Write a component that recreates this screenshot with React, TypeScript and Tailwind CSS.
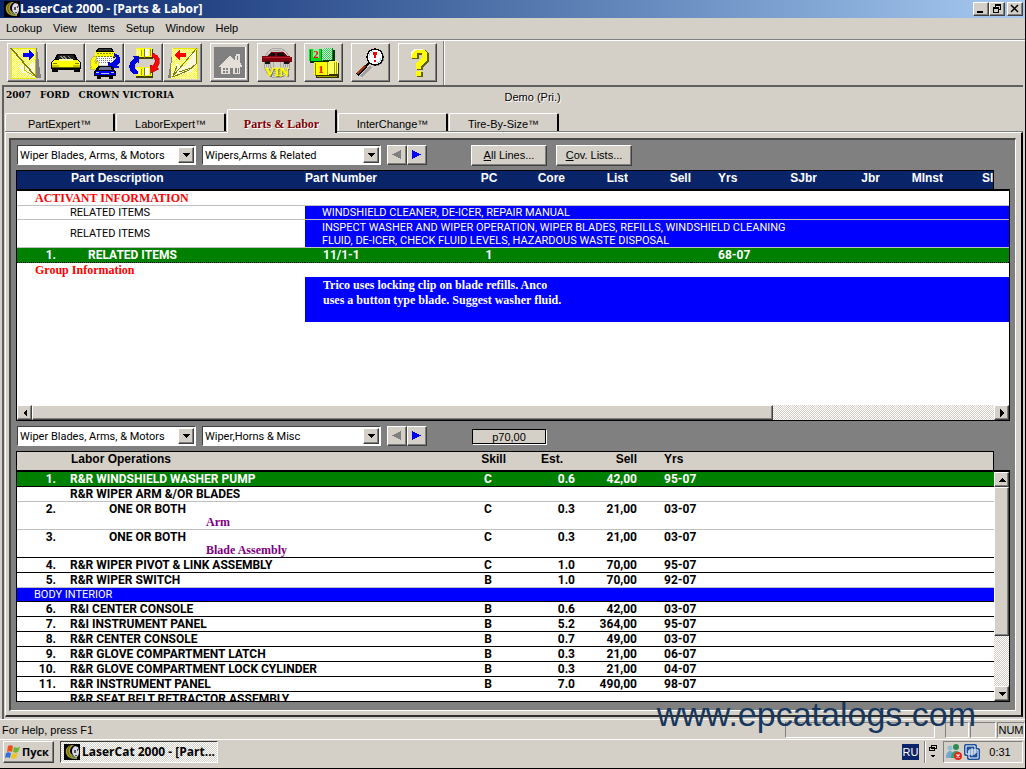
import React from 'react';
import { clsx } from 'clsx';

const SANS = "font-['Liberation_Sans',Arial,sans-serif]";
const GRID = "font-['Roboto',Arial,sans-serif]";
const CAPTION_FONT = "font-['Open_Sans',Tahoma,sans-serif] font-bold";
const SERIF = "font-['Liberation_Serif',serif] font-bold";
const RAISED = 'bg-[#d4d0c8] border border-t-white border-l-white border-r-[#404040] border-b-[#404040] shadow-[inset_-1px_-1px_0_#808080]';
const SUNKEN = 'border border-t-[#808080] border-l-[#808080] border-r-white border-b-white';
const DITHER = 'bg-[repeating-conic-gradient(#ffffff_0_25%,#d4d0c8_0_50%)] bg-[length:2px_2px]';

/* ---------- ICONS ---------- */

const Glyph: React.FC<{ children: React.ReactNode }> = ({ children }) => (
  <svg viewBox="0 0 32 32" className="w-8 h-8 overflow-visible" shapeRendering="crispEdges" aria-hidden="true">
    <defs>
      <pattern id="yellowDither" width="2" height="2" patternUnits="userSpaceOnUse">
        <rect width="2" height="2" fill="#ffff00" />
        <rect width="1" height="1" fill="#fff" />
        <rect x="1" y="1" width="1" height="1" fill="#fff" />
      </pattern>
      <pattern id="greenDither" width="2" height="2" patternUnits="userSpaceOnUse">
        <rect width="2" height="2" fill="#00f030" />
        <rect width="1" height="1" fill="#fff" />
        <rect x="1" y="1" width="1" height="1" fill="#fff" />
      </pattern>
    </defs>
    {children}
  </svg>
);

const NextPageIcon = () => (
  <Glyph>
    <path d="M25 1h1l4 30h-5z" fill="#808080" />
    <path d="M0 1h25v31H0z" fill="url(#yellowDither)" />
    <path d="M0.500 31.500V1.500h24v30z" stroke="#e8e800" fill="none" />
    <path d="M7 17l4 8 13 6V12l-5 7-6-1z" fill="#f8f8d8" />
    <path d="M14 18l-1 5 10 6M24 13v17" stroke="#c0c000" fill="none" />
    <path d="M0 1l25 29" stroke="#808000" strokeWidth="1.500" />
    <path d="M12 6h6V3l6 5-6 5v-3h-6z" fill="#0000ff" />
  </Glyph>
);

const PrevPageIcon = () => (
  <Glyph>
    <path d="M6 1L1 31h6z" fill="#808080" />
    <path d="M5 1h26v31H4z" fill="url(#yellowDither)" />
    <path d="M5.500 1.500h25v30" stroke="#e8e800" fill="none" />
    <path d="M5 29l5-12 3 1 5 1L29 3v14l-5 8-9 2z" fill="#f8f8d8" />
    <path d="M30 1L5 30M6 30l16-7 7-6V3M10 19l-4 10M12 25l12-4" stroke="#808000" fill="none" />
    <path d="M19 6h-6V3L7 8l6 5v-3h6z" fill="#ff0000" />
  </Glyph>
);

const CarIcon = () => (
  <Glyph>
    <path d="M7 7h18l3 6 3 2v7h-1v3h-6v-2H8v2H2v-3H1v-7l3-2z" fill="#000" />
    <path d="M9 8h14l2 4H7z" fill="#202020" />
    <path d="M10 9l4 3M13 9l4 3M18 9l3 3" stroke="#909090" fill="none" />
    <path d="M5 13h22l3 2v3H2v-3z" fill="#ffff00" />
    <path d="M9 12h14v2H9z" fill="#ffffa0" />
    <path d="M2 18h28v2H2z" fill="#c8c800" />
    <path d="M3 16h4v1H3zM25 16h4v1h-4z" fill="#808000" />
    <path d="M9 18h14v2H9z" fill="#ffff00" />
    <path d="M2 20h28v1H2z" fill="#606000" />
  </Glyph>
);

const CarSwapIcon = () => (
  <Glyph>
    <path d="M9 1h14l3 5v5H6V6z" fill="#000" />
    <path d="M10 2h12l1 2H9z" fill="#303030" />
    <path d="M6 5h20v5H6z" fill="#ffff00" />
    <path d="M8 6h16M6 9h20" stroke="#808000" strokeDasharray="2 1" />
    <path d="M8 10h16v8H8z" fill="#fff" />
    <path d="M8 11.500h16M8 13.500h16M8 15.500h16" stroke="#808080" strokeDasharray="1 1" />
    <path d="M6 9C1 11 0 17 3 20H1v2h8v-8H7v3c-2-2-1-5 1-6z" fill="#ffff00" stroke="#a0a000" strokeWidth=".5" />
    <path d="M25 6c8 2 8 9 3 13h2v2H19v-6l3 1c5-2 6-6 3-8z" fill="#0000e0" />
    <path d="M9 19h14l4 6v4h-3v3h-4v-2h-8v2H8v-3H5v-4z" fill="#000" />
    <path d="M7 24h18l1 4H6z" fill="#0000ff" />
    <path d="M11 20h11l1 3H10z" fill="#707090" />
    <path d="M7 25h3v1H7zM22 25h3v1h-3zM12 26h8v1h-8z" fill="#c0c0ff" />
  </Glyph>
);

const Book: React.FC<{ y: number }> = ({ y }) => (
  <g transform={`translate(8 ${y})`}>
    <path d="M0 2h17v10H0z" fill="#404000" />
    <path d="M0 1h7l1 1 1-1h7v9H9l-1 1-1-1H0z" fill="#ffff00" />
    <path d="M1 2h1v7H1zM3 2h1v7H3zM9 2h4v7H9z" fill="#fff" />
    <path d="M5 3v6M14.500 2v7" stroke="#a0a000" fill="none" />
    <path d="M8.500 2v9" stroke="#808000" fill="none" />
  </g>
);

const BookSwapIcon = () => (
  <Glyph>
    <Book y={0} />
    <Book y={19} />
    <path d="M4 9h7v8l-2-2c-4 3-3 7 1 9v3h-4C0 24-1 16 6 11z" fill="#0000e0" />
    <path d="M25 6c8 3 8 10 4 15l2 1-8 4-1-8 3 1c3-4 3-7-1-9z" fill="#ff0000" stroke="#a00000" strokeWidth=".5" />
  </Glyph>
);

const HomeIcon = () => (
  <Glyph>
    <path d="M0 0h32v32H0z" fill="#808080" />
    <path d="M4 20L16 9l5 4V9h1V7h4v8l2 4v1z" fill="#e4e0d8" />
    <path d="M7 20h19v7H7z" fill="#e4e0d8" />
    <path d="M9 21h5v5H9zM16 21h3v6h-3zM21 21h4v5h-4z" fill="#808080" />
    <path d="M11.500 21v5M9 23.500h5M23.500 21v5" stroke="#e4e0d8" />
    <path d="M23 9h1v4h-1z" fill="#808080" />
    <path d="M31.500 0v31.500H0" stroke="#fff" fill="none" />
  </Glyph>
);

const VinIcon = () => (
  <Glyph>
    <g fill="none" stroke="#a8a8a8">
      <ellipse cx="16" cy="16" rx="13" ry="15" />
      <ellipse cx="16" cy="16" rx="11" ry="13" />
      <ellipse cx="16" cy="16" rx="9" ry="11" />
      <ellipse cx="16" cy="16" rx="7" ry="9" />
      <ellipse cx="16" cy="17" rx="4" ry="6" />
    </g>
    <path d="M1 9h5l4-4h12l4 4 5 1v5h-2v1h-5v-1H9v1H4v-1H1z" fill="#800010" />
    <path d="M2 10h28v1H2z" fill="#b02030" />
    <path d="M10 6h4v3H8zM16 6h5l3 3h-8z" fill="#101010" />
    <path d="M4 14h5v3H4zM23 14h5v3h-5z" fill="#201010" />
    <text x="17" y="30" textAnchor="middle" className="font-['Liberation_Serif',serif] font-bold text-[13px]" fill="#505000">VIN</text>
    <text x="16" y="29" textAnchor="middle" className="font-['Liberation_Serif',serif] font-bold text-[13px]" fill="#ffff00" stroke="#ffff00" strokeWidth=".4">VIN</text>
  </Glyph>
);

const CatalogIcon = () => (
  <Glyph>
    <path d="M2 3h24l1 1v12H2z" fill="#003000" />
    <path d="M1 2h12v12H1z" fill="#00e020" />
    <path d="M2 3v12" stroke="#006000" />
    <path d="M13 2l3-1h9v12h-9l-3 1z" fill="url(#greenDither)" />
    <path d="M13.500 2v12M24.500 1v12" stroke="#008020" />
    <path d="M5 2h6v9H5z" fill="#90f0a0" />
    <path d="M8 16h23v15H8z" fill="#303000" />
    <path d="M6 15h13v13H6z" fill="#ffff00" />
    <path d="M7.500 16v13" stroke="#808000" />
    <path d="M19 15l3-1h8v13h-8l-3 1z" fill="#ffff60" />
    <path d="M19.500 15v13M26.500 15v12M28.500 15v12" stroke="#a0a000" />
    <path d="M9 29h20v1H9z" fill="#a0a000" />
    <text x="8" y="11" textAnchor="middle" className="font-['Liberation_Serif',serif] font-bold text-[11px]" fill="#ff0000">2</text>
    <text x="13" y="26" textAnchor="middle" className="font-['Liberation_Serif',serif] font-bold text-[11px]" fill="#ff0000">1</text>
  </Glyph>
);

const MagnifierIcon = () => (
  <Glyph>
    <path d="M14 19L5 29l2 1 10-10z" fill="#a0a0a0" />
    <circle cx="21" cy="11" r="8" fill="#909090" />
    <circle cx="20" cy="10" r="8" fill="#fff" stroke="#000" strokeWidth="1.500" />
    <path d="M14 9a6 6 0 0 1 4-5M26 11a6 6 0 0 1-4 5" stroke="#80e0e0" fill="none" />
    <path d="M18 5h4l-1 6h-2zM19 13h2v2h-2z" fill="#ff0000" />
    <path d="M14 16l-3 3" stroke="#000" strokeWidth="2" />
    <path d="M11 19L2 28" stroke="#000" strokeWidth="4" />
    <path d="M10 19L2 27" stroke="#a03010" strokeWidth="2" />
  </Glyph>
);

const HelpIcon = () => (
  <Glyph>
    <path d="M10 12V6l4-3h9l4 4v7l-6 6v3h-6v-6l6-5V8h-4v4z" fill="#606000" />
    <path d="M15 25h6v5h-6z" fill="#606000" />
    <path d="M9 11V5l3-3h9l4 4v7l-6 6v3h-5v-6l6-5V6h-5v5z" fill="#ffff00" />
    <path d="M9 5l3-3h9v1h-8l-3 3v4H9z" fill="#fff" />
    <path d="M14 24h5v5h-5z" fill="#ffff00" />
  </Glyph>
);

const CatLogo = () => (
  <svg viewBox="0 0 16 16" className="w-4 h-4 shrink-0" aria-hidden="true">
    <path d="M0 0h16v16H0z" fill="#000" />
    <path d="M8 1C3 2 1 5 2 9c1 4 4 6 11 6v-2C9 12 6 10 6 7c0-2 1-4 4-6z" fill="#a8982c" />
    <path d="M6 2C3 5 3 10 7 13" stroke="#605818" fill="none" />
    <path d="M11 2l3 1 1 4c0 4-1 6-3 6-3-1-4-3-4-6 0-2 1-4 3-5z" fill="#d8d8e8" />
    <path d="M10 6h2v3h-2zM13 5h1v2h-1zM11 11h2v1h-2z" fill="#505050" />
    <path d="M8 12l3 2" stroke="#008080" />
  </svg>
);

const WindowsFlag = () => (
  <svg viewBox="0 0 16 16" className="w-4 h-4 shrink-0" aria-hidden="true">
    <path d="M3 2c2-1 3-1 5 0L7 8C5 7 4 7 2 8z" fill="#e8501c" />
    <path d="M9 3c2 1 3 1 6 0l-2 5c-2 1-3 1-5 0z" fill="#6cb52d" />
    <path d="M1 9c2-1 3-1 5 0l-1 5c-2-1-3-1-5 0z" fill="#2f6fe0" />
    <path d="M7 9c2 1 3 1 6 0l-2 5c-2 1-3 1-5 0z" fill="#f5c21b" />
  </svg>
);

type Dir = 'left' | 'right' | 'up' | 'down';

const Arrow: React.FC<{ dir: Dir; className?: string }> = ({ dir, className = 'w-2 h-2' }) => {
  const paths = { left: 'M6 0v8L2 4z', right: 'M2 0v8l4-4z', up: 'M0 6h8L4 2z', down: 'M0 2h8L4 6z' };
  return (
    <svg viewBox="0 0 8 8" className={className} shapeRendering="crispEdges" aria-hidden="true">
      <path d={paths[dir]} fill="currentColor" />
    </svg>
  );
};

/* ---------- CONTROLS ---------- */

const ToolButton: React.FC<{ label: string; className?: string; children: React.ReactNode }> = ({ label, className, children }) => (
  <button aria-label={label} className={clsx('w-[39px] h-[39px] flex items-center justify-center shrink-0', RAISED, className)}>
    {children}
  </button>
);

const Combo: React.FC<{ label: string; value: string }> = ({ label, value }) => (
  <div className="flex w-[179px] h-5 p-px bg-white border border-t-[#404040] border-l-[#404040] border-r-white border-b-white">
    <select aria-label={label} className={clsx('flex-1 min-w-0 appearance-none bg-white pl-px pt-0.5 text-[11px] leading-[14px] text-black outline-none', GRID)}>
      <option>{value}</option>
    </select>
    <span className={clsx('w-4 flex items-center justify-center pointer-events-none', RAISED)}>
      <Arrow dir="down" />
    </span>
  </div>
);

const Spin: React.FC<{ name: string }> = ({ name }) => (
  <div className="flex">
    <button aria-label={`Previous ${name}`} className={clsx('w-5 h-5 flex items-center justify-center', RAISED)}>
      <svg viewBox="0 0 10 10" className="w-2.5 h-2.5" shapeRendering="crispEdges"><path d="M9 0v9L0 4.500z" fill="#808080" /></svg>
    </button>
    <button aria-label={`Next ${name}`} className={clsx('w-5 h-5 flex items-center justify-center', RAISED)}>
      <svg viewBox="0 0 10 10" className="w-2.5 h-2.5" shapeRendering="crispEdges"><path d="M0 0v9l9-4.500z" fill="#0000ff" /></svg>
    </button>
  </div>
);

const ScrollButton: React.FC<{ dir: Dir }> = ({ dir }) => (
  <button aria-label={`Scroll ${dir}`} className={clsx('w-[15px] h-[15px] shrink-0 flex items-center justify-center', RAISED)}>
    <Arrow dir={dir} />
  </button>
);

/* ---------- PARTS ---------- */

const partHeads = [
  { label: 'PC', cls: 'text-center' },
  { label: 'Core', cls: 'text-right' },
  { label: 'List', cls: 'text-right' },
  { label: 'Sell', cls: 'text-right' },
  { label: 'Yrs', cls: 'text-left pl-[27px]' },
  { label: 'SJbr', cls: 'text-right' },
  { label: 'Jbr', cls: 'text-right' },
  { label: 'MInst', cls: 'text-right' },
  { label: 'SI', cls: 'text-left pl-[39px]' },
];

const PartCols = () => (
  <colgroup>
    <col className="w-[39px]" />
    <col className="w-[249px]" />
    <col className="w-[165px]" />
    <col className="w-[38px]" />
    <col className="w-[57px]" />
    <col className="w-[63px]" />
    <col className="w-[63px]" />
    <col className="w-[79px]" />
    <col className="w-[47px]" />
    <col className="w-[63px]" />
    <col className="w-[63px]" />
    <col />
  </colgroup>
);

const TABLE = 'w-full table-fixed border-separate border-spacing-0';

const PartsPane = () => (
  <section className="flex-1 min-h-0 flex flex-col">
    <div className="mr-4 border border-b-0 border-black bg-[#0a246a] overflow-hidden">
      <table className={clsx(TABLE, SANS, 'text-[12px] leading-[14px] text-white')}>
        <PartCols />
        <thead>
          <tr className="h-[18px] align-top">
            <th />
            <th className="text-left pl-[15px]">Part Description</th>
            <th className="text-left">Part Number</th>
            {partHeads.map(h => <th key={h.label} className={clsx('overflow-hidden', h.cls)}>{h.label}</th>)}
          </tr>
        </thead>
      </table>
    </div>
    <div className="flex-1 min-h-0 flex flex-col border border-t-2 border-black bg-white">
      <div className="flex-1 min-h-0 overflow-hidden">
        <table className={clsx(TABLE, GRID, 'text-[11px] leading-[14px] text-black')}>
          <PartCols />
          <tbody>
            <tr>
              <td colSpan={12} className={clsx('h-[15px] pl-[18px] border-b border-[#c0c0c0] text-[12px] text-[#ff0000]', SERIF)}>ACTIVANT INFORMATION</td>
            </tr>
            <tr>
              <td className="border-b border-[#c0c0c0]" />
              <td className="h-[14px] leading-[13px] pl-[14px] border-b border-[#c0c0c0]">RELATED ITEMS</td>
              <td colSpan={10} className="leading-[13px] pl-[17px] bg-[#0000ff] text-white border-b border-[#c0c0c0]">WINDSHIELD CLEANER, DE-ICER, REPAIR MANUAL</td>
            </tr>
            <tr>
              <td className="border-b border-[#c0c0c0]" />
              <td className="h-7 pl-[14px] border-b border-[#c0c0c0]">RELATED ITEMS</td>
              <td colSpan={10} className="h-7 leading-[13px] pl-[17px] bg-[#0000ff] text-white border-b border-[#c0c0c0]">
                INSPECT WASHER AND WIPER OPERATION, WIPER BLADES, REFILLS, WINDSHIELD CLEANING<br />
                FLUID, DE-ICER, CHECK FLUID LEVELS, HAZARDOUS WASTE DISPOSAL
              </td>
            </tr>
            <tr className="bg-[#008000] text-white text-[12px] font-bold">
              <td className="h-[15px] text-right border-b border-dotted border-black">1.</td>
              <td className="pl-8 border-b border-dotted border-black">RELATED ITEMS</td>
              <td className="pl-[18px] border-b border-dotted border-black">11/1-1</td>
              <td className="text-center border-b border-dotted border-black">1</td>
              <td colSpan={3} className="border-b border-dotted border-black" />
              <td colSpan={5} className="pl-[27px] border-b border-dotted border-black">68-07</td>
            </tr>
            <tr>
              <td colSpan={12} className={clsx('h-[14px] pl-[18px] text-[12px] text-[#ff0000]', SERIF)}>Group Information</td>
            </tr>
            <tr>
              <td colSpan={2} />
              <td colSpan={10} className={clsx('h-[45px] pl-[18px] pt-px align-top bg-[#0000ff] text-white text-[12px] leading-[15px]', SERIF)}>
                Trico uses locking clip on blade refills. Anco<br />
                uses a button type blade. Suggest washer fluid.
              </td>
            </tr>
          </tbody>
        </table>
      </div>
      <div className="flex">
        <ScrollButton dir="left" />
        <div className={clsx('flex-1', DITHER)}>
          <div className={clsx('h-full w-[77%]', RAISED)} />
        </div>
        <ScrollButton dir="right" />
      </div>
    </div>
  </section>
);

/* ---------- LABOR ---------- */

interface LaborRow {
  no?: string;
  text: string;
  note?: string;
  skill?: string;
  est?: string;
  sell?: string;
  yrs?: string;
  kind?: 'selected' | 'section';
  soft?: boolean;
}

const laborRows: LaborRow[] = [
  { no: '1.', text: 'R&R WINDSHIELD WASHER PUMP', skill: 'C', est: '0.6', sell: '42,00', yrs: '95-07', kind: 'selected' },
  { text: 'R&R WIPER ARM &/OR BLADES', soft: true },
  { no: '2.', text: 'ONE OR BOTH', note: 'Arm', skill: 'C', est: '0.3', sell: '21,00', yrs: '03-07', soft: true },
  { no: '3.', text: 'ONE OR BOTH', note: 'Blade Assembly', skill: 'C', est: '0.3', sell: '21,00', yrs: '03-07' },
  { no: '4.', text: 'R&R WIPER PIVOT & LINK ASSEMBLY', skill: 'C', est: '1.0', sell: '70,00', yrs: '95-07' },
  { no: '5.', text: 'R&R WIPER SWITCH', skill: 'B', est: '1.0', sell: '70,00', yrs: '92-07', soft: true },
  { text: 'BODY INTERIOR', kind: 'section' },
  { no: '6.', text: 'R&I CENTER CONSOLE', skill: 'B', est: '0.6', sell: '42,00', yrs: '03-07' },
  { no: '7.', text: 'R&I INSTRUMENT PANEL', skill: 'B', est: '5.2', sell: '364,00', yrs: '95-07' },
  { no: '8.', text: 'R&R CENTER CONSOLE', skill: 'B', est: '0.7', sell: '49,00', yrs: '03-07' },
  { no: '9.', text: 'R&R GLOVE COMPARTMENT LATCH', skill: 'B', est: '0.3', sell: '21,00', yrs: '06-07' },
  { no: '10.', text: 'R&R GLOVE COMPARTMENT LOCK CYLINDER', skill: 'B', est: '0.3', sell: '21,00', yrs: '04-07' },
  { no: '11.', text: 'R&R INSTRUMENT PANEL', skill: 'B', est: '7.0', sell: '490,00', yrs: '98-07' },
  { text: 'R&R SEAT BELT RETRACTOR ASSEMBLY' },
];

const LaborCols = () => (
  <colgroup>
    <col className="w-[39px]" />
    <col className="w-[414px]" />
    <col className="w-[36px]" />
    <col className="w-[69px]" />
    <col className="w-[62px]" />
    <col />
  </colgroup>
);

const LaborLine: React.FC<{ row: LaborRow }> = ({ row }) => {
  const line = clsx('border-b', row.soft ? 'border-[#c0c0c0]' : 'border-black');
  if (row.kind === 'section') {
    return (
      <tr>
        <td colSpan={6} className={clsx('h-[14px] text-[11px] leading-[13px] pl-[17px] bg-[#0000ff] text-white', line)}>{row.text}</td>
      </tr>
    );
  }
  return (
    <tr className={clsx('align-top font-bold', row.kind === 'selected' && 'bg-[#008000] text-white')}>
      <td className={clsx('text-right', line)}>{row.no}</td>
      <td className={clsx(row.note ? 'h-7 pl-[53px]' : 'h-[15px] pl-[14px]', line)}>
        {row.text}
        {row.note && <div className={clsx('pl-[97px] leading-[13px] text-[#800080]', SERIF)}>{row.note}</div>}
      </td>
      <td className={clsx('text-center', line)}>{row.skill}</td>
      <td className={clsx('text-right', line)}>{row.est}</td>
      <td className={clsx('text-right', line)}>{row.sell}</td>
      <td className={clsx('pl-[27px]', line)}>{row.yrs}</td>
    </tr>
  );
};

const LaborPane = () => (
  <section className="flex-1 min-h-0 flex flex-col">
    <div className="mr-4 border border-b-0 border-black bg-[#d4d0c8]">
      <table className={clsx(TABLE, SANS, 'text-[12px] leading-[14px] text-black')}>
        <LaborCols />
        <thead>
          <tr className="h-[18px] align-top">
            <th />
            <th className="text-left pl-[15px]">Labor Operations</th>
            <th className="text-right">Skill</th>
            <th className="text-right pr-3">Est.</th>
            <th className="text-right">Sell</th>
            <th className="text-left pl-[27px]">Yrs</th>
          </tr>
        </thead>
      </table>
    </div>
    <div className="flex-1 min-h-0 flex border border-t-2 border-black bg-white">
      <div className="flex-1 min-w-0 overflow-hidden">
        <table className={clsx(TABLE, GRID, 'text-[12px] leading-[14px] text-black')}>
          <LaborCols />
          <tbody>
            {laborRows.map((row, i) => <LaborLine key={i} row={row} />)}
          </tbody>
        </table>
      </div>
      <div className="flex flex-col">
        <ScrollButton dir="up" />
        <div className={clsx('flex-1', DITHER)}>
          <div className={clsx('h-3/4', RAISED)} />
        </div>
        <ScrollButton dir="down" />
      </div>
    </div>
  </section>
);

/* ---------- CHROME ---------- */

const CAPTION = clsx('w-4 h-[14px] flex items-center justify-center text-black', RAISED);

const TitleBar = () => (
  <header className="h-[18px] flex items-center shrink-0 pl-1 pr-0.5 bg-linear-to-r from-[#0a246a] to-[#a6caf0]">
    <CatLogo />
    <h1 className={clsx('flex-1 text-[12px] leading-[18px] text-white', CAPTION_FONT)}>LaserCat 2000 - [Parts &amp; Labor]</h1>
    <button aria-label="Minimize" className={CAPTION}>
      <svg viewBox="0 0 10 10" className="w-2.5 h-2.5" shapeRendering="crispEdges"><path d="M1 7h6v2H1z" /></svg>
    </button>
    <button aria-label="Restore" className={CAPTION}>
      <svg viewBox="0 0 10 10" className="w-2.5 h-2.5" shapeRendering="crispEdges">
        <path d="M3 0h6v6H7V5h1V2H4v1H3zM1 3h6v6H1zm1 2v3h4V5z" fillRule="evenodd" />
      </svg>
    </button>
    <button aria-label="Close" className={clsx(CAPTION, 'ml-0.5')}>
      <svg viewBox="0 0 10 10" className="w-2.5 h-2.5"><path d="M1 1l7 7M8 1L1 8" stroke="#000" strokeWidth="1.500" /></svg>
    </button>
  </header>
);

const tabs = ['PartExpert™', 'LaborExpert™', 'Parts & Labor', 'InterChange™', 'Tire-By-Size™'];

const Tabs = () => (
  <div role="tablist" className="flex items-end gap-px h-[22px] border-b border-[#808080]">
    {tabs.map(tab => {
      const active = tab === 'Parts & Labor';
      return (
        <button
          key={tab}
          role="tab"
          aria-selected={active}
          className={clsx(
            'w-[110px] bg-[#d4d0c8] border-t border-l border-r-2 border-t-white border-l-white border-r-black rounded-t-xs',
            active
              ? clsx('h-6 -mb-0.5 pt-1 relative text-[12px] text-[#800000] [text-shadow:1px_1px_#fff]', SERIF)
              : clsx('h-[18px] pt-0.5 text-[11px] text-black', SANS),
          )}
        >
          {tab}
        </button>
      );
    })}
  </div>
);

const StatusBar = () => (
  <footer className={clsx('h-5 shrink-0 flex items-center border-t border-white bg-[#d4d0c8] pl-0.5 text-[11px] text-black', SANS)}>
    <span className="flex-1 pt-px">For Help, press F1</span>
    <span className={clsx('w-[150px] h-4 mr-2.5', SUNKEN)} />
    <span className={clsx('w-6 h-4 mr-px', SUNKEN)} />
    <span className={clsx('w-[26px] h-4 mr-px', SUNKEN)} />
    <span className={clsx('w-7 h-4 leading-[15px] text-center', SUNKEN)}>NUM</span>
  </footer>
);

const TaskBar = () => (
  <nav className="h-[30px] shrink-0 flex items-center gap-[7px] pl-[3px] pr-0.5 pb-1 border-t border-white border-b border-b-black bg-[#d4d0c8] text-black">
    <button className={clsx('h-[22px] w-[51px] flex items-center gap-px pl-px text-[11px]', CAPTION_FONT, RAISED)}>
      <WindowsFlag />
      Пуск
    </button>
    <button className={clsx('h-[22px] w-[158px] -ml-px flex items-center gap-0.5 pl-[3px] text-[12px] border border-t-[#404040] border-l-[#404040] border-r-white border-b-white', CAPTION_FONT, DITHER)}>
      <CatLogo />
      LaserCat 2000 - [Part...
    </button>
    <div className="flex-1" />
    <span className={clsx('w-[17px] h-4 bg-[#0a246a] text-white text-[11px] leading-4 text-center', SANS)}>RU</span>
    <div className="h-[22px] w-4 -ml-0.5 border-l border-[#808080] shadow-[inset_1px_0_#fff] flex flex-col items-center justify-between py-1">
      <svg viewBox="0 0 8 6" className="w-2 h-1.5" shapeRendering="crispEdges" aria-hidden="true">
        <path d="M2.500 .5h5v3h-5zM.5 2.500h5v3h-5z" fill="#d4d0c8" stroke="#000" />
      </svg>
      <Arrow dir="down" className="w-1.5 h-1.5" />
    </div>
    <div className={clsx('h-[22px] w-[80px] -ml-1 flex items-center gap-0.5 pl-0.5 pr-1 text-[11px]', SUNKEN, SANS)}>
      <svg viewBox="0 0 16 16" className="w-4 h-4 shrink-0" aria-hidden="true">
        <circle cx="4" cy="4" r="2.500" fill="#8fc0d8" />
        <path d="M0 14c0-5 2-7 4-7s4 2 4 7z" fill="#70a8d0" />
        <circle cx="10" cy="3" r="3" fill="#2e8b57" />
        <path d="M5 14c0-5 2-7 5-7s5 2 5 7z" fill="#3aa070" />
        <circle cx="12" cy="12" r="4" fill="#e02818" />
        <path d="M10.500 10.500l3 3M13.500 10.500l-3 3" stroke="#fff" strokeWidth="1.200" />
      </svg>
      <svg viewBox="0 0 16 16" className="w-4 h-4 shrink-0" aria-hidden="true">
        <rect x="0" y="0" width="13" height="12" rx="2" fill="#1c4f9c" />
        <rect x="3" y="4" width="13" height="12" rx="2" fill="#1c4f9c" />
        <path d="M2 2h9v8H2zM5 6h9v8H5z" fill="none" stroke="#fff" />
        <path d="M8 4v8M4 8h9" stroke="#fff" />
      </svg>
      <time className="flex-1 text-center">0:31</time>
    </div>
  </nav>
);

export default function App() {
  return (
    <div className="h-screen flex flex-col overflow-hidden relative bg-[#d4d0c8] border-r border-black text-black">
      <TitleBar />

      <nav className={clsx('h-[22px] shrink-0 flex items-center gap-[11px] pl-1.5 border-b border-[#808080] text-[11px]', SANS)}>
        {['Lookup', 'View', 'Items', 'Setup', 'Window', 'Help'].map(item => <button key={item}>{item}</button>)}
      </nav>

      <div className="h-[45px] shrink-0 flex items-start pl-[7px] border-t border-white">
        <div className="flex pt-0.5">
          <ToolButton label="Next page"><NextPageIcon /></ToolButton>
          <ToolButton label="Vehicle"><CarIcon /></ToolButton>
          <ToolButton label="Switch vehicle"><CarSwapIcon /></ToolButton>
          <ToolButton label="Switch catalog"><BookSwapIcon /></ToolButton>
          <ToolButton label="Previous page"><PrevPageIcon /></ToolButton>
          <ToolButton label="Home" className="ml-2"><HomeIcon /></ToolButton>
          <ToolButton label="VIN lookup" className="ml-2"><VinIcon /></ToolButton>
          <ToolButton label="Catalogs" className="ml-2"><CatalogIcon /></ToolButton>
          <ToolButton label="Search" className="ml-2"><MagnifierIcon /></ToolButton>
          <ToolButton label="Help" className="ml-2"><HelpIcon /></ToolButton>
        </div>
        <div className="w-0.5 h-full ml-1.5 border-l border-[#808080] bg-white" />
      </div>

      <main className="flex-1 min-h-0 flex flex-col ml-0.5 mr-0.5 pl-px border-t-2 border-l-2 border-[#606060]">
        <div className="h-[23px] flex pt-0.5">
          <h2 className="flex-1 flex gap-[9px] pl-px font-['DejaVu_Serif',serif] font-bold text-[9px] leading-3">
            <span>2007</span>
            <span>FORD</span>
            <span>CROWN VICTORIA</span>
          </h2>
          <p className={clsx('flex-1 -ml-5 leading-4 text-[11px] [text-shadow:1px_1px_#fff]', SANS)}>Demo (Pri.)</p>
        </div>
        <Tabs />

        <div className="flex-1 min-h-0 flex flex-col pt-[5px] pl-[3px] pr-[5px] pb-1 mb-0.5 border-t border-l border-r-2 border-b-2 border-t-white border-l-white border-r-black border-b-[#303030]">
          <div className="flex-1 min-h-0 flex flex-col px-[5px] pb-2 bg-[#808080] border-2 border-r border-b border-t-[#484848] border-l-[#484848] border-r-white border-b-white">
            <div className="h-[30px] shrink-0 flex items-center gap-1.5 pl-px">
              <Combo label="Part category" value="Wiper Blades, Arms, & Motors" />
              <Combo label="Part group" value="Wipers,Arms & Related" />
              <Spin name="part group" />
              <button className={clsx('w-[76px] h-[21px] ml-[38px] text-[11px]', SANS, RAISED)}><u>A</u>ll Lines...</button>
              <button className={clsx('w-[76px] h-[21px] ml-[3px] text-[11px]', SANS, RAISED)}><u>C</u>ov. Lists...</button>
            </div>
            <PartsPane />
            <div className="h-[30px] shrink-0 flex items-center gap-1.5 pl-px">
              <Combo label="Labor category" value="Wiper Blades, Arms, & Motors" />
              <Combo label="Labor group" value="Wiper,Horns & Misc" />
              <Spin name="labor group" />
              <output className={clsx('w-[74px] h-[15px] ml-[39px] leading-[14px] text-center text-[11px] bg-[#d4d0c8] border border-black shadow-[1px_1px_#fff]', SANS)}>p70,00</output>
            </div>
            <LaborPane />
          </div>
        </div>
      </main>

      <StatusBar />
      <TaskBar />

      <div className={clsx('absolute right-[49px] bottom-[35px] text-[34px] leading-10 text-[#17375e] pointer-events-none', SANS)}>www.epcatalogs.com</div>
    </div>
  );
}
